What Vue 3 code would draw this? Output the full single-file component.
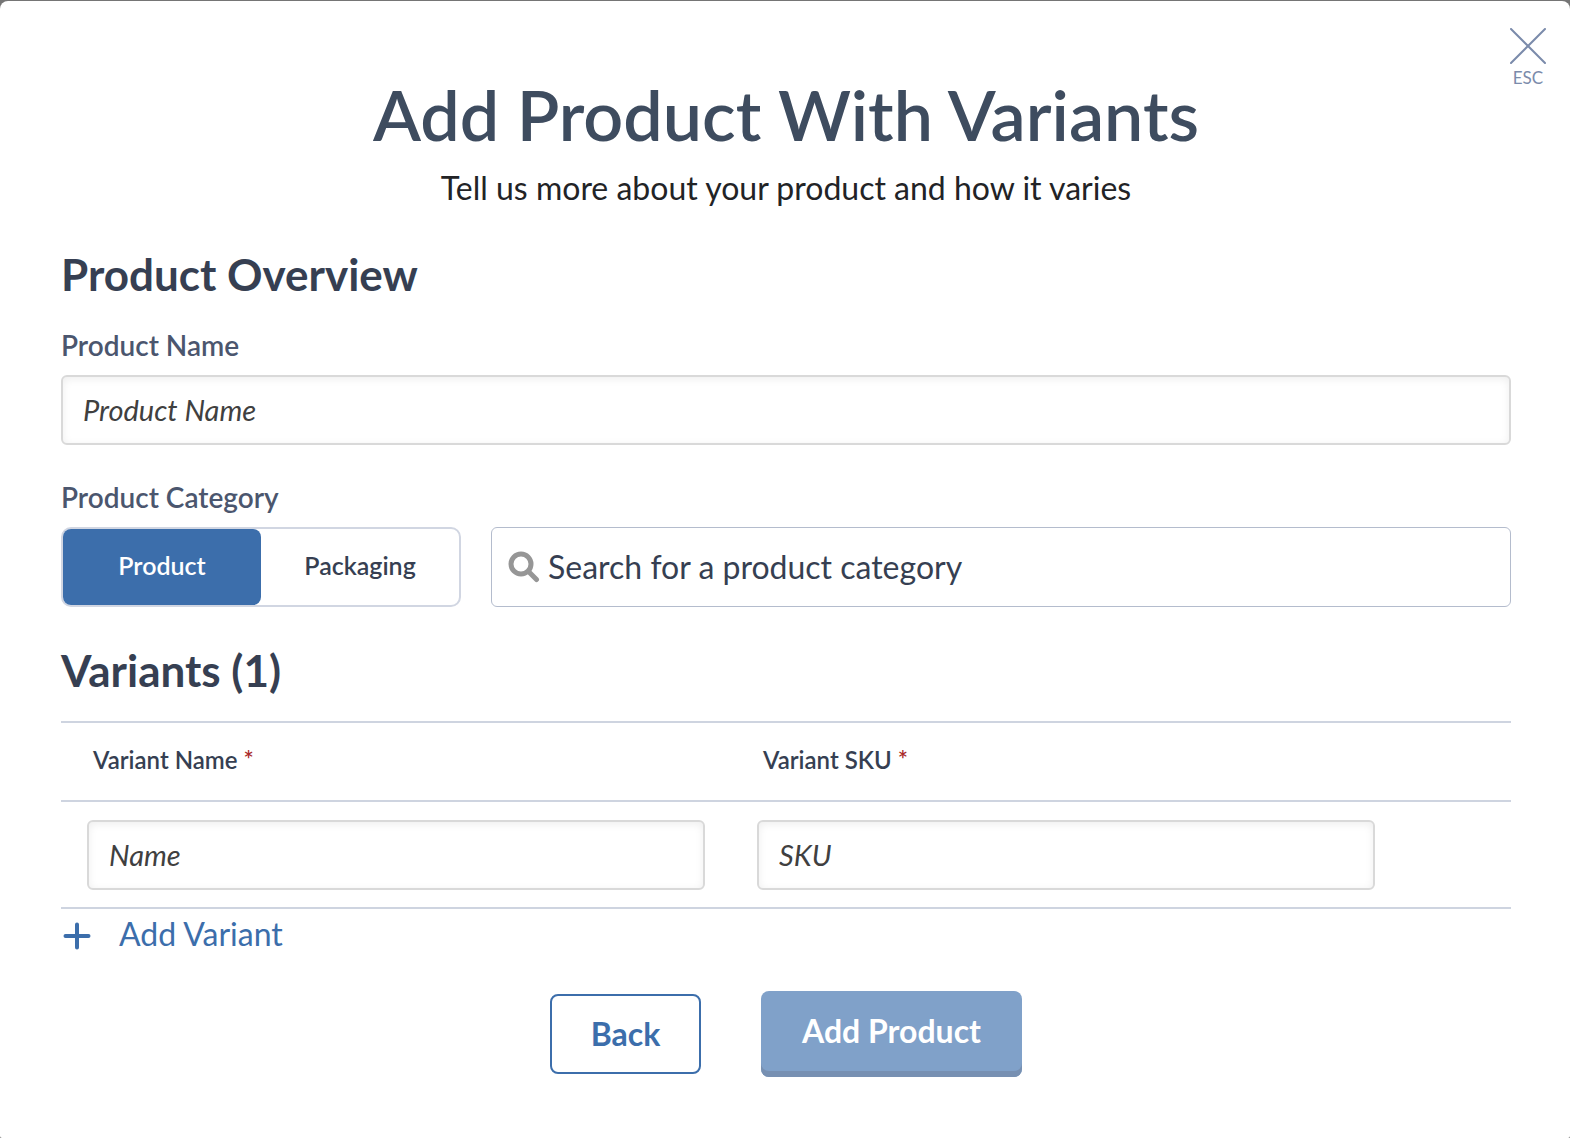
<script setup>
import { ref } from 'vue';

const productName = ref('');
const category = ref('');
const activeType = ref('Product');
const types = ['Product', 'Packaging'];

const variants = ref([{ id: 1, name: '', sku: '' }]);

const addVariant = () => {
  variants.value.push({ id: variants.value.length + 1, name: '', sku: '' });
};
</script>

<template>
  <main class="modal">
    <button class="close" type="button">
      <svg class="close-icon" viewBox="0 0 36 36" aria-hidden="true">
        <path d="M1 1L35 35M35 1L1 35" />
      </svg>
      <span>ESC</span>
    </button>

    <header class="header">
      <h1 class="title">Add Product With Variants</h1>
      <p class="subtitle">Tell us more about your product and how it varies</p>
    </header>

    <form @submit.prevent>
      <h2 class="section-title">Product Overview</h2>

      <label class="label" for="product-name">Product Name</label>
      <input id="product-name" v-model="productName" class="field" type="text" placeholder="Product Name" />

      <label class="label label-category" for="product-category">Product Category</label>
      <div class="category">
        <div class="toggle">
          <button
            v-for="type in types"
            :key="type"
            type="button"
            class="toggle-item"
            :class="{ active: type === activeType }"
            :aria-pressed="type === activeType"
            @click="activeType = type"
          >
            {{ type }}
          </button>
        </div>
        <div class="search">
          <svg class="search-icon" viewBox="0 0 32 32" aria-hidden="true">
            <circle cx="13" cy="13" r="10" />
            <path d="M20.500 20.500L28.500 28.500" />
          </svg>
          <input
            id="product-category"
            v-model="category"
            class="search-input"
            type="text"
            placeholder="Search for a product category"
          />
        </div>
      </div>

      <h2 class="section-title section-variants">Variants ({{ variants.length }})</h2>

      <table class="variants">
        <thead>
          <tr>
            <th scope="col">Variant Name <span class="required">*</span></th>
            <th scope="col">Variant SKU <span class="required">*</span></th>
            <th class="actions"></th>
          </tr>
        </thead>
        <tbody>
          <tr v-for="variant in variants" :key="variant.id">
            <td><input v-model="variant.name" class="field" type="text" placeholder="Name" aria-label="Variant Name" /></td>
            <td><input v-model="variant.sku" class="field" type="text" placeholder="SKU" aria-label="Variant SKU" /></td>
            <td></td>
          </tr>
        </tbody>
      </table>

      <button class="add-variant" type="button" @click="addVariant">
        <svg class="plus-icon" viewBox="0 0 28 28" aria-hidden="true">
          <path d="M14 2.500V25.500M2.500 14H25.500" />
        </svg>
        <span class="add-variant-text">Add Variant</span>
      </button>

      <div class="buttons">
        <button class="back" type="button">Back</button>
        <button class="submit" type="submit">Add Product</button>
      </div>
    </form>
  </main>
</template>

<style>
body {
  background-color: #757575;
}
</style>

<style scoped>
.modal {
  position: relative;
  box-sizing: border-box;
  min-height: calc(100vh - 1px);
  margin-top: 1px;
  padding: 73px 59px 60px 61px;
  border-radius: 8px 8px 2px 2px;
  background-color: #fff;
  color: #363f52;
  font-family: Lato, 'Liberation Sans', sans-serif;
}

button,
input {
  box-sizing: border-box;
  margin: 0;
  font-family: inherit;
}

button {
  padding: 0;
  border: none;
  background: none;
  cursor: pointer;
}

.close {
  position: absolute;
  top: 27px;
  right: 24px;
  display: flex;
  flex-direction: column;
  align-items: center;
  gap: 4px;
  color: #7b8bab;
  font-size: 17px;
  line-height: 20px;
}

.close-icon {
  width: 36px;
  height: 36px;
  fill: none;
  stroke: currentColor;
  stroke-width: 2;
  stroke-linecap: round;
}

.header {
  text-align: center;
}

.title {
  margin: 0;
  color: #3e4c5f;
  font-size: 70px;
  font-weight: 600;
  line-height: 80px;
}

.subtitle {
  margin: 14px 0 0;
  color: #222326;
  font-size: 32px;
  line-height: 40px;
}

.section-title {
  margin: 40px 0 0;
  font-size: 44px;
  font-weight: 700;
  line-height: 52px;
}

.section-variants {
  margin-top: 37px;
}

.label {
  display: block;
  margin: 29px 0 14px;
  color: #4b566e;
  font-size: 28px;
  font-weight: 600;
  line-height: 32px;
}

.label-category {
  margin-top: 36px;
}

.field {
  display: block;
  width: 100%;
  height: 70px;
  padding: 0 20px 2px;
  border: 2px solid #d9d9d9;
  border-radius: 6px;
  box-shadow: inset 0 2px 8px rgba(0, 0, 0, 0.07);
  background-color: #fff;
  color: #404040;
  font-size: 29px;
}

.field::placeholder {
  color: #404040;
  font-style: italic;
}

.category {
  display: flex;
  gap: 30px;
}

.toggle {
  display: flex;
  box-sizing: border-box;
  width: 400px;
  height: 80px;
  border: 2px solid #d1d6e2;
  border-radius: 10px;
}

.toggle-item {
  flex: 1;
  padding-bottom: 4px;
  border-radius: 8px;
  color: #363f52;
  font-size: 25px;
  font-weight: 600;
}

.toggle-item.active {
  background-color: #3c6eab;
  color: #fff;
}

.search {
  display: flex;
  flex: 1;
  align-items: center;
  gap: 8px;
  box-sizing: border-box;
  padding: 0 16px;
  border: 1px solid #b4bccd;
  border-radius: 6px;
}

.search-icon {
  flex: none;
  width: 32px;
  height: 32px;
  fill: none;
  stroke: #969696;
  stroke-width: 5;
  stroke-linecap: round;
}

.search-input {
  flex: 1;
  height: 76px;
  padding: 0 0 2px;
  border: none;
  outline: none;
  background: none;
  color: #363f52;
  font-size: 32px;
}

.search-input::placeholder {
  color: #363f52;
}

.variants {
  width: 100%;
  margin-top: 25px;
  border-top: 2px solid #ced4e0;
  border-spacing: 0;
  table-layout: fixed;
}

.variants th {
  height: 73px;
  padding: 0 32px 4px;
  border-bottom: 2px solid #ced4e0;
  font-size: 24px;
  font-weight: 600;
  text-align: left;
}

.variants td {
  padding: 18px 26px 17px;
  border-bottom: 2px solid #ced4e0;
}

.variants .actions {
  width: 110px;
  padding: 0 0 4px;
}

.required {
  color: #a92a2a;
}

.add-variant {
  display: flex;
  align-items: center;
  gap: 28px;
  margin-top: 6px;
  padding-left: 2px;
  color: #3c6eab;
  font-size: 32px;
  line-height: 38px;
}

.add-variant-text {
  padding-bottom: 4px;
}

.plus-icon {
  width: 28px;
  height: 28px;
  fill: none;
  stroke: currentColor;
  stroke-width: 4;
  stroke-linecap: round;
}

.buttons {
  display: flex;
  align-items: center;
  justify-content: center;
  gap: 60px;
  margin-top: 34px;
}

.back,
.submit {
  border-radius: 8px;
  font-size: 32px;
  font-weight: 700;
}

.back {
  width: 151px;
  height: 80px;
  padding-bottom: 2px;
  border: 2px solid #3c6eab;
  color: #3c6eab;
}

.submit {
  width: 261px;
  height: 86px;
  padding-bottom: 8px;
  box-shadow: inset 0 -6px 0 #7790b2;
  background-color: #80a1c9;
  color: #fff;
}
</style>
